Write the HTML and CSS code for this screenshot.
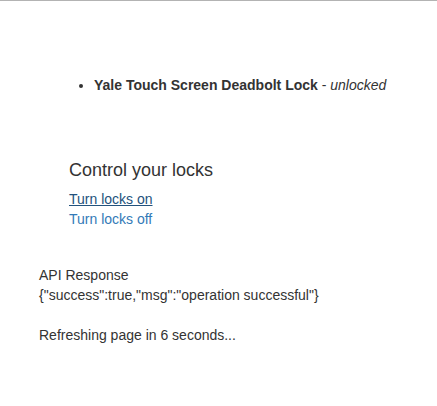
FILE: index.html
```html
<!DOCTYPE html>
<html lang="en">
<head>
<meta charset="utf-8">
<title>Locks</title>
<link rel="stylesheet" href="styles.css">
</head>
<body>
<div class="page">
  <ul class="devices">
    <li><strong>Yale Touch Screen Deadbolt Lock</strong> - <em>unlocked</em></li>
  </ul>
  <div class="controls">
    <h3 class="controls-title">Control your locks</h3>
    <a class="control-link control-link--active" href="#on">Turn locks on</a>
    <a class="control-link" href="#off">Turn locks off</a>
  </div>
  <div class="response">
    <div class="response-label">API Response</div>
    <div class="response-body">{"success":true,"msg":"operation successful"}</div>
    <p class="refresh">Refreshing page in 6 seconds...</p>
  </div>
</div>
</body>
</html>
```
FILE: styles.css
```css
html, body {
  margin: 0;
  padding: 0;
  background: #fff;
}
body {
  border-top: 1px solid #b3b3b3;
  font-family: "Liberation Sans", Arial, sans-serif;
  font-size: 14px;
  line-height: 20px;
  color: #333;
}
.page {
  padding: 0 39px;
}
.devices {
  margin: 74px 0 0 30px;
  padding-left: 25px;
  list-style: disc;
}
.devices strong {
  font-weight: bold;
}
.controls {
  margin-left: 30px;
  display: flex;
  flex-direction: column;
  align-items: flex-start;
}
.controls-title {
  margin: 65px 0 9px;
  font-size: 18px;
  line-height: 20px;
  font-weight: normal;
}
.control-link {
  color: #337ab7;
  text-decoration: none;
}
.control-link--active {
  color: #23527c;
  text-decoration: underline;
}
.response {
  margin-top: 36px;
}
.refresh {
  margin: 20px 0 0;
}
```
